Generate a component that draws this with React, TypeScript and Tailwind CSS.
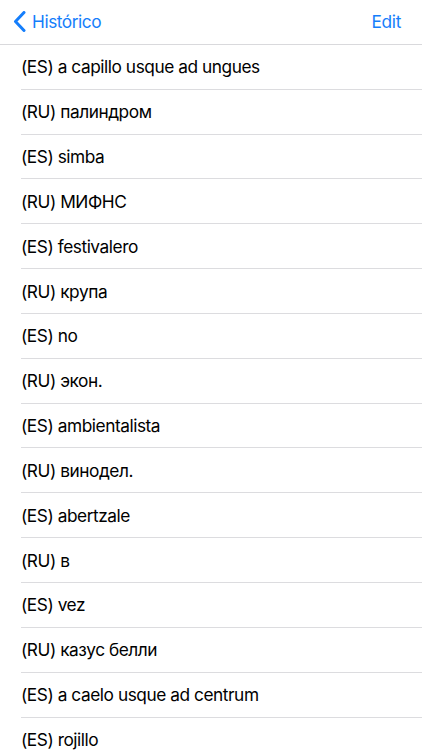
import React from "react";

const items = [
  "(ES) a capillo usque ad ungues",
  "(RU) палиндром",
  "(ES) simba",
  "(RU) МИФНС",
  "(ES) festivalero",
  "(RU) крупа",
  "(ES) no",
  "(RU) экон.",
  "(ES) ambientalista",
  "(RU) винодел.",
  "(ES) abertzale",
  "(RU) в",
  "(ES) vez",
  "(RU) казус белли",
  "(ES) a caelo usque ad centrum",
  "(ES) rojillo",
];

export default function App() {
  return (
    <div
      className="w-[422px] h-[750px] overflow-hidden bg-white text-black"
      style={{ fontFamily: "Inter, 'Liberation Sans', sans-serif" }}
    >
      <div className="h-[44.85px] flex items-center justify-between border-b border-[#d9d9dc] bg-white">
        <div className="flex items-center text-[#157efb] text-[17.3px] tracking-[-0.45px] pl-[13px]">
          <svg width="13" height="21" viewBox="0 0 13 21" className="mr-[6px]">
            <path d="M11 1.5 L2.5 10.5 L11 19.5" fill="none" stroke="#157efb" strokeWidth="3" strokeLinecap="round" strokeLinejoin="round" />
          </svg>
          <span>Histórico</span>
        </div>
        <div className="text-[#157efb] text-[17.3px] tracking-[-0.3px] pr-[21px]">Edit</div>
      </div>
      <div className="flex flex-col">
        {items.map((t, i) => (
          <div key={i} className="h-[44.85px] shrink-0 pl-[21px] flex flex-col">
            <div className="flex-1 flex items-center pt-[1px] text-[17.3px] tracking-[-0.45px]">{t}</div>
            <div className="h-px bg-[#dcdcdf]" />
          </div>
        ))}
      </div>
    </div>
  );
}
